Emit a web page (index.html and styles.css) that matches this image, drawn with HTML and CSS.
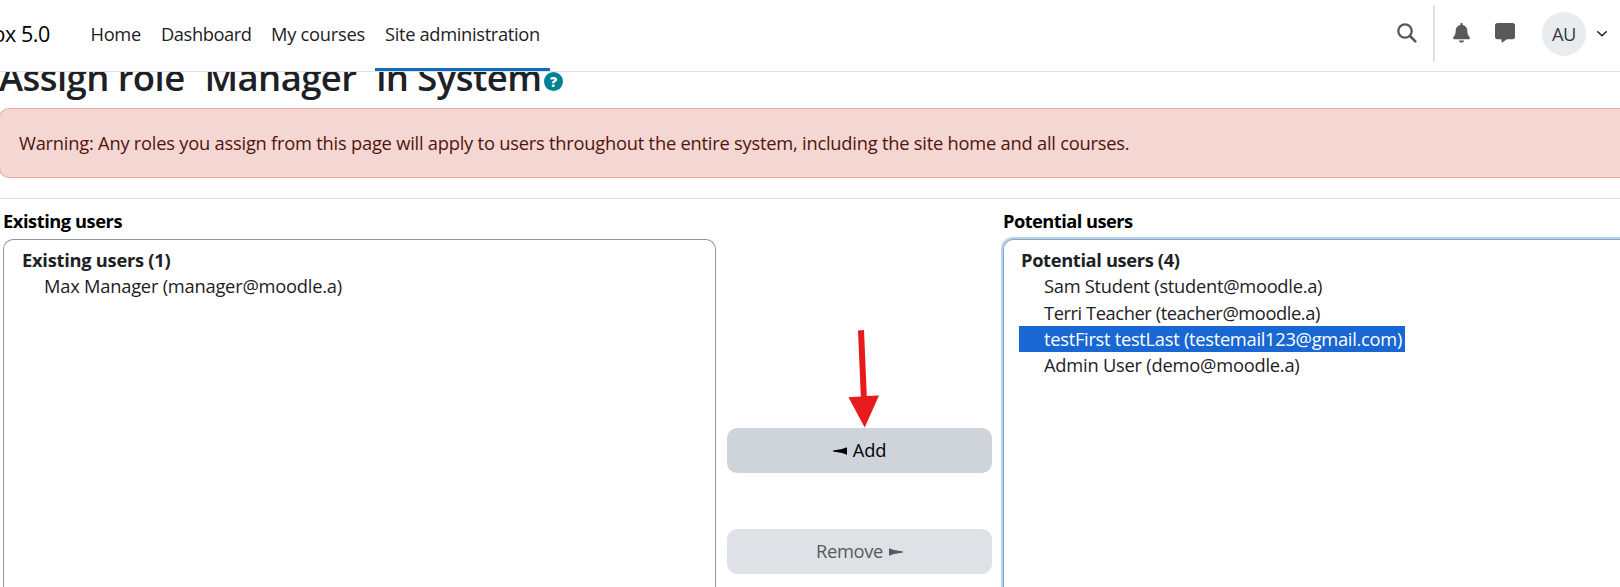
FILE: index.html
```html
<!DOCTYPE html>
<html lang="en">
<head>
<meta charset="utf-8">
<title>Assign role</title>
<link rel="stylesheet" href="styles.css">
</head>
<body>
<header class="navbar">
  <a class="brand"><span>ox 5.0</span></a>
  <nav class="menu">
    <a class="link home">Home</a>
    <a class="link dash">Dashboard</a>
    <a class="link mine">My courses</a>
    <a class="link admin active">Site administration</a>
  </nav>
  <div class="tools">
    <svg class="search" width="20" height="20" viewBox="0 0 20 20"><circle cx="8" cy="8" r="6.7" fill="none" stroke="#595959" stroke-width="2.3"/><path d="M13 13l5.3 5.3" stroke="#595959" stroke-width="2.6" stroke-linecap="round"/></svg>
    <span class="divider"></span>
    <svg class="bell" width="17" height="20" viewBox="0 0 17 20"><path fill="#595959" d="M8.5 0c.7 0 1.200.5 1.200 1.200v.7c2.800.5 4.600 2.700 4.600 5.600 0 3.300.8 5 2.200 6.600.8.9.3 2.200-.9 2.200H1.400c-1.200 0-1.700-1.300-.9-2.200C1.900 12.500 2.700 10.800 2.700 7.500c0-2.900 1.800-5.100 4.600-5.600v-.7C7.300.5 7.800 0 8.500 0zM6 17.400h5c0 1.300-1.100 2.100-2.500 2.100S6 18.700 6 17.400z"/></svg>
    <svg class="chat" width="20" height="20" viewBox="0 0 20 20"><path fill="#595959" d="M2.500 0h15A2.500 2.500 0 0 1 20 2.500v11.200a2.500 2.500 0 0 1-2.500 2.500H12L7.300 19.400c-.4.300-.8.100-.8-.4v-2.800h-4A2.500 2.500 0 0 1 0 13.700V2.500A2.500 2.500 0 0 1 2.500 0z"/></svg>
    <span class="avatar">AU</span>
    <svg class="caret" width="10" height="6" viewBox="0 0 10 6"><path d="M.8.8L5 4.800 9.200.8" fill="none" stroke="#1d2125" stroke-width="1.500" stroke-linecap="round"/></svg>
  </div>
</header>
<main class="page">
  <div class="title-row">
    <h1 class="title">Assign role <span class="quote">'</span>Manager<span class="quote">'</span> in System</h1>
    <span class="help">?</span>
  </div>
  <div class="alert"><span>Warning: Any roles you assign from this page will apply to users throughout the entire system, including the site home and all courses.</span></div>
  <div class="assign">
    <section class="existing">
      <div class="label l1">Existing users</div>
      <div class="listbox">
        <div class="group g1">Existing users (1)</div>
        <div class="option o1">Max Manager (manager@moodle.a)</div>
      </div>
    </section>
    <section class="controls">
      <svg class="arrow" width="32" height="99" viewBox="0 0 32 99"><path fill="#e81b1c" d="M10 .5l6-.5 2.800 66 12.200-.5L16.700 97.500 .5 67.200l12.300-.6z"/></svg>
      <div class="btn add"><svg width="14" height="8" viewBox="0 0 14 8"><path d="M14 .3v7.400L9 5.900 0 4.500v-.9l9-1.500z"/></svg><span>Add</span></div>
      <div class="btn remove"><span>Remove</span><svg width="14" height="8" viewBox="0 0 14 8"><path fill="currentColor" d="M0 .3v7.400l5-1.800L14 4.500v-.9l-9-1.500z"/></svg></div>
    </section>
    <section class="potential">
      <div class="label l2">Potential users</div>
      <div class="listbox focused">
        <div class="group g2">Potential users (4)</div>
        <div class="option o2">Sam Student (student@moodle.a)</div>
        <div class="option o3">Terri Teacher (teacher@moodle.a)</div>
        <div class="option o4 selected">testFirst testLast (testemail123@gmail.com)</div>
        <div class="option o5">Admin User (demo@moodle.a)</div>
      </div>
    </section>
  </div>
</main>
</body>
</html>
```
FILE: styles.css
```css
* { box-sizing: border-box; }
body {
  margin: 0;
  height: 587px;
  overflow: hidden;
  background: #fff;
  color: #1d2125;
  font: 18.3px/26.3px "Open Sans", "Noto Sans", sans-serif;
  white-space: nowrap;
}
.page { height: 515px; }
.navbar {
  position: relative;
  z-index: 2;
  display: flex;
  height: 72px;
  background: #fff;
  border-bottom: 1px solid #dee2e6;
}
.brand {
  display: flex;
  justify-content: flex-end;
  flex: none;
  width: 50px;
  margin-right: 31px;
  padding-top: 21px;
  color: #000;
  font-size: 21.5px;
  letter-spacing: -0.4px;
}
.menu { display: flex; }
.link { padding: 21px 10px 0; height: 71px; letter-spacing: -0.33px; }
.home { width: 70px; padding-left: 9.5px; }
.dash { width: 110px; letter-spacing: -0.42px; }
.mine { width: 114px; letter-spacing: -0.25px; }
.admin { width: 175px; }
.active { border-bottom: 3px solid #0f6cbf; }
.tools { display: flex; align-items: flex-start; margin-left: auto; padding-right: 3px; }
.search { margin: 23px 16px 0 0; }
.divider { width: 2px; height: 57px; margin: 5px 18px 0 0; background: #dee2e6; }
.bell { margin: 23px 25px 0 0; }
.chat { margin: 23px 27px 0 0; }
.avatar {
  width: 44px;
  height: 44px;
  margin: 12px 11px 0 0;
  border-radius: 50%;
  background: #e9ecef;
  color: #343a40;
  line-height: 44px;
  text-align: center;
  letter-spacing: -0.4px;
}
.caret { margin: 31px 10px 0 0; }
.title-row { display: flex; height: 36px; align-items: flex-start; }
.title { margin: -19px 0 0 -1px; font-size: 36.5px; line-height: 48px; font-weight: 600; width: 545px; letter-spacing: -0.58px; }
.quote { vertical-align: 5px; line-height: 1; letter-spacing: 2px; }
.help {
  width: 19px;
  height: 19px;
  border-radius: 50%;
  background: #008196;
  color: #fff;
  font-size: 14px;
  font-weight: 800;
  line-height: 19px;
  text-align: center;
}
.alert {
  height: 70px;
  margin: 0 0 20px -1px;
  padding: 21px 19px;
  border: 1px solid #efa9a4;
  border-right: 0;
  border-radius: 10px 0 0 10px;
  background: #f4d6d2;
  color: #51140d;
  letter-spacing: -0.22px;
}
.assign {
  display: grid;
  grid-template-columns: 713px 287px 617px;
  height: 389px;
  padding-left: 3px;
  border-top: 1px solid #dee2e6;
}
.label { height: 40px; padding-top: 9px; color: #000; font-weight: 700; letter-spacing: -0.45px; }
.l2 { letter-spacing: -0.55px; }
.listbox {
  height: 348px;
  padding: 7px 15px;
  border: 1px solid #8f959e;
  border-bottom: 0;
  border-radius: 10px 10px 0 0;
}
.focused { border-color: #87a4c5; border-right: 0; border-radius: 10px 0 0 0; box-shadow: 0 0 0 2px #b7d3ec; }
.group { padding-left: 3px; font-weight: 700; letter-spacing: -0.25px; }
.g2 { padding-left: 2px; letter-spacing: -0.35px; }
.option { padding-left: 25px; letter-spacing: -0.22px; }
.o2 { letter-spacing: -0.27px; }
.o3 { letter-spacing: -0.42px; }
.o4 { letter-spacing: -0.28px; }
.selected { width: 386px; background: #1967d2; color: #fff; }
.controls { display: flex; flex-direction: column; padding: 131px 11px 0; }
.arrow { flex: none; margin: 0 0 -1px 121px; }
.btn {
  display: flex;
  flex: none;
  align-items: center;
  justify-content: center;
  gap: 6px;
  height: 45px;
  border-radius: 10px;
  background: #ced4da;
  color: #000;
  letter-spacing: -0.2px;
}
.remove { margin-top: 56px; background: #dee2e6; color: #595959; letter-spacing: -0.35px; }
```
